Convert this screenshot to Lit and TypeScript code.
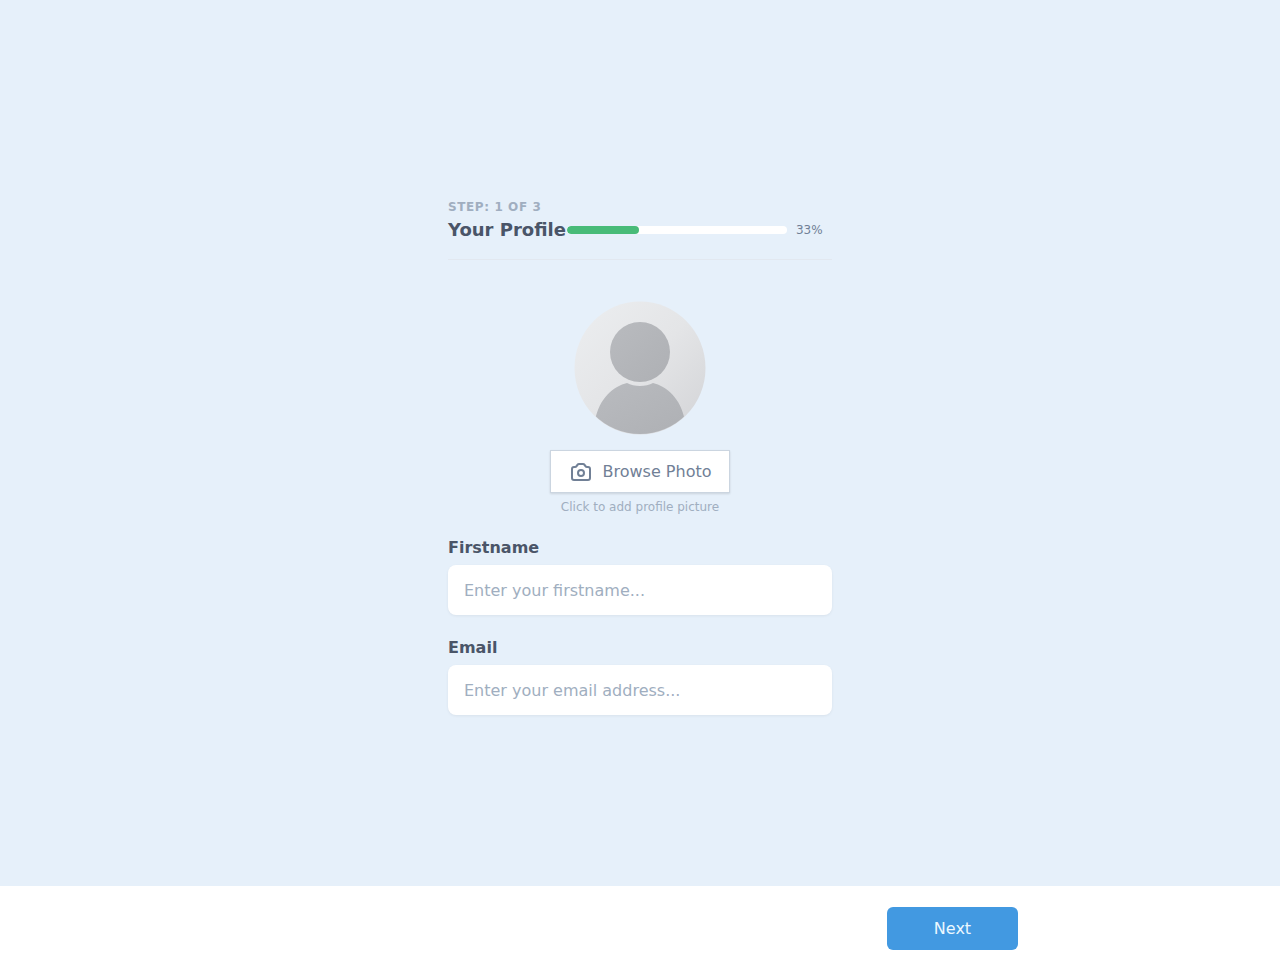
import { LitElement, html, css } from "lit";
import { customElement } from "lit/decorators.js";

@customElement("app-root")
export class AppRoot extends LitElement {
  static styles = css`
    :host {
      display: flex;
      flex-direction: column;
      height: 957px;
      font-family: "DejaVu Sans", sans-serif;
      background: #e6f0fa;
    }
    * { box-sizing: border-box; }
    .main {
      flex: 1;
      padding-top: 199px;
      display: flex;
      justify-content: center;
    }
    .col { width: 384px; display: flex; flex-direction: column; }
    .header { height: 61px; border-bottom: 1px solid #e2e8f0; }
    .step {
      font-size: 12px;
      font-weight: 700;
      line-height: 16px;
      letter-spacing: 0.6px;
      color: #a0aec0;
      text-transform: uppercase;
    }
    .row { display: flex; align-items: center; height: 28px; margin-top: 1px; }
    .title { font-size: 18px; font-weight: 700; line-height: 28px; color: #4a5568; white-space: nowrap; }
    .track { width: 220px; height: 8px; background: #fff; border-radius: 4px; overflow: hidden; margin-left: 1px; }
    .fill { height: 100%; background: #48bb78; border-radius: 4px; }
    .pct { font-size: 12px; color: #718096; margin-left: 9px; line-height: 16px; }
    .photo { display: flex; flex-direction: column; align-items: center; margin-top: 41px; }
    .avatar { width: 132px; height: 134px; display: block; }
    .browse {
      margin-top: 15px;
      width: 180px;
      height: 43px;
      background: #fff;
      border: 1px solid #cbd5e0;
      display: flex;
      align-items: center;
      justify-content: center;
      gap: 10px;
      font-size: 16px;
      color: #718096;
      box-shadow: 0 1px 2px rgba(0,0,0,.12);
      font-family: inherit;
      padding: 0;
    }
    .browse svg { display: block; }
    .hint { font-size: 12px; line-height: 16px; color: #a0aec0; margin-top: 6px; }
    .field { display: flex; flex-direction: column; }
    .f1 { margin-top: 21px; }
    .f2 { margin-top: 21px; }
    label { font-size: 16px; font-weight: 700; line-height: 24px; color: #4a5568; margin-bottom: 5px; }
    input {
      height: 50px;
      width: 100%;
      border: none;
      outline: none;
      border-radius: 8px;
      background: #fff;
      padding: 0 16px;
      font-size: 16px;
      font-family: inherit;
      color: #4a5568;
      box-shadow: 0 1px 3px rgba(0,0,0,.06);
    }
    input::placeholder { color: #a0aec0; opacity: 1; }
    .footer {
      height: 71px;
      background: #fff;
      display: flex;
      align-items: flex-start;
      padding: 21px 0 0 887px;
    }
    .next {
      width: 131px;
      height: 43px;
      background: #4299e1;
      border: none;
      border-radius: 6px;
      color: #ebf8ff;
      font-size: 16px;
      font-family: inherit;
      padding: 0;
    }
  `;

  render() {
    return html`
      <div class="main">
        <div class="col">
          <div class="header">
            <div class="step">Step: 1 of 3</div>
            <div class="row">
              <div class="title">Your Profile</div>
              <div class="track"><div class="fill" style="width:33%"></div></div>
              <div class="pct">33%</div>
            </div>
          </div>
          <div class="photo">
            <svg class="avatar" viewBox="0 0 132 134" fill="none">
              <defs>
                <linearGradient id="bg" x1="0" y1="0" x2="1" y2="1">
                  <stop offset="0" stop-color="#eceef0"/>
                  <stop offset="0.5" stop-color="#e4e5e7"/>
                  <stop offset="1" stop-color="#d2d3d6"/>
                </linearGradient>
                <linearGradient id="fg" x1="0" y1="0" x2="1" y2="1">
                  <stop offset="0" stop-color="#b9bbbf"/>
                  <stop offset="1" stop-color="#aeb0b4"/>
                </linearGradient>
                <clipPath id="c"><ellipse cx="66" cy="67" rx="65" ry="66"/></clipPath>
              </defs>
              <ellipse cx="66" cy="67" rx="65.5" ry="66.5" fill="url(#bg)"/>
              <g clip-path="url(#c)">
                <circle cx="66" cy="51" r="30" fill="url(#fg)"/>
                <path d="M20 134C21 106 40 82 66 87C92 82 111 106 112 134Z" fill="#fff" opacity="0"/>
                <path d="M21 120C25 97 40 85 53 82C60 86 72 86 79 82C92 85 107 97 111 120V134H21Z" fill="url(#fg)"/>
              </g>
            </svg>
            <button class="browse">
              <svg width="24" height="24" viewBox="0 0 24 24" fill="none" stroke="#718096" stroke-width="2" stroke-linecap="round" stroke-linejoin="round">
                <path d="M3 9a2 2 0 0 1 2-2h.93a2 2 0 0 0 1.664-.89l.812-1.22A2 2 0 0 1 10.07 4h3.86a2 2 0 0 1 1.664.89l.812 1.22A2 2 0 0 0 18.07 7H19a2 2 0 0 1 2 2v9a2 2 0 0 1-2 2H5a2 2 0 0 1-2-2V9z"/>
                <path d="M15 13a3 3 0 1 1-6 0 3 3 0 0 1 6 0z"/>
              </svg>
              Browse Photo
            </button>
            <div class="hint">Click to add profile picture</div>
          </div>
          <div class="field f1">
            <label>Firstname</label>
            <input placeholder="Enter your firstname..." />
          </div>
          <div class="field f2">
            <label>Email</label>
            <input placeholder="Enter your email address..." />
          </div>
        </div>
      </div>
      <div class="footer"><button class="next">Next</button></div>
    `;
  }
}
